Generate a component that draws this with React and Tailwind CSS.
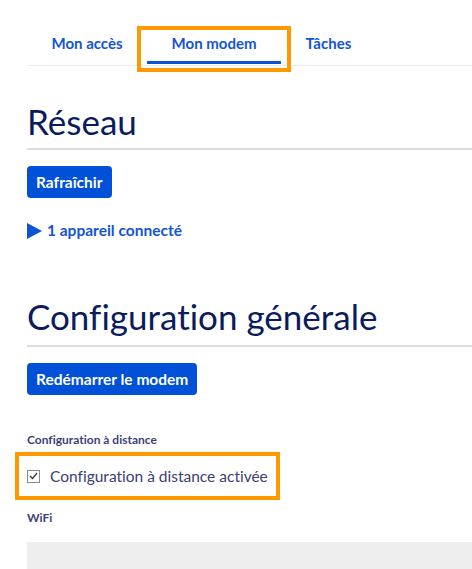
const Tab = ({ label, active }) => (
  <div className="relative flex h-[42px] items-center px-[24.5px]">
    <span className="-mt-[1px] text-[15px] font-bold text-[#1454d6]">{label}</span>
    {active && (
      <>
        <div className="absolute bottom-[1px] left-0 right-0 h-[3px] bg-[#0a52d6]" />
        <div className="absolute -left-[10px] -right-[10px] top-[3px] -bottom-[7px] border-[4px] border-[#ff9900]" />
      </>
    )}
  </div>
);

const App = () => {
  return (
    <div className="h-[569px] overflow-hidden bg-white pl-[27px] font-['Lato',sans-serif] [font-variant-ligatures:none]">
      {/* tabs */}
      <div className="mt-[23px] flex border-b border-[#e6edf5]">
        <Tab label="Mon accès" />
        <Tab label="Mon modem" active />
        <Tab label="Tâches" />
      </div>

      {/* Réseau */}
      <h1 className="mt-[33px] border-b-2 border-[#dddddd] pb-[5px] text-[35px] leading-[44px] text-[#0b1c5e]">Réseau</h1>
      <button className="mt-[16px] rounded-[4px] bg-[#0050d8] px-[9px] py-[6px] text-[15.5px] font-bold leading-[20px] text-white">Rafraîchir</button>
      <div className="mt-[21px] flex items-center gap-[5px] text-[15.5px] font-bold text-[#1454d6]">
        <svg width="15" height="16" viewBox="0 0 15 16"><path d="M0 0 L15 8 L0 16 Z" fill="#0a52d6" /></svg>
        <span>1 appareil connecté</span>
      </div>

      {/* Configuration générale */}
      <h1 className="mt-[52px] border-b-2 border-[#dddddd] pb-[7px] text-[35px] leading-[44px] text-[#0b1c5e]">Configuration générale</h1>
      <button className="mt-[16px] rounded-[4px] bg-[#0050d8] px-[9px] py-[6px] text-[15.5px] font-bold leading-[20px] text-white">Redémarrer le modem</button>

      <div className="mt-[36px] text-[12px] font-bold text-[#3d3f78]">Configuration à distance</div>
      <div className="mt-[3px] -ml-[12px] inline-flex items-center gap-[10px] border-[4px] border-[#ff9900] py-[9px] pl-[8px] pr-[8px]">
        <span className="flex h-[13px] w-[13px] items-center justify-center border border-[#8a8a8a] bg-white">
          <svg width="9" height="8" viewBox="0 0 9 8"><path d="M1 4 L3.5 6.5 L8 1" fill="none" stroke="#333" strokeWidth="1.2" /></svg>
        </span>
        <span className="text-[15.5px] leading-[22px] text-[#3b4173]">Configuration à distance activée</span>
      </div>
      <div className="mt-[9px] text-[12px] font-bold text-[#3d3f78]">WiFi</div>
      <div className="mt-[15px] h-[40px] bg-[#eeeeee]" />
    </div>
  );
};

export default App;
